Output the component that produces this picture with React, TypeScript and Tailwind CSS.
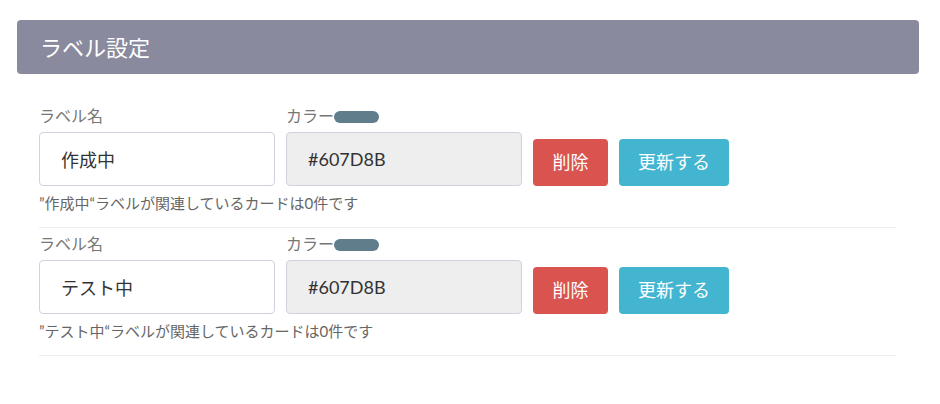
import React from 'react'

const labels = [
  { name: '作成中', color: '#607D8B' },
  { name: 'テスト中', color: '#607D8B' },
]

function LabelRow({ name, color }: { name: string; color: string }) {
  return (
    <div className="border-b border-[#eeeeee] pt-[4px] pb-[14px]">
      <div className="flex items-end gap-[11px]">
        <div className="flex w-[236px] flex-col">
          <span className="text-[16px] leading-[24px] text-[#777777]">ラベル名</span>
          <input
            defaultValue={name}
            className="mt-[4px] h-[54px] w-full rounded-[4px] border border-[#d4d0e2] bg-white px-[21px] text-[18px] text-[#333333] outline-none"
          />
        </div>
        <div className="flex w-[236px] flex-col">
          <span className="flex items-center text-[16px] leading-[24px] text-[#777777]">
            カラー
            <span className="mt-[1px] inline-block h-[12px] w-[45px] rounded-full" style={{ backgroundColor: color }} />
          </span>
          <input
            defaultValue={color}
            readOnly
            className="mt-[4px] h-[54px] w-full rounded-[4px] border border-[#d4d0e2] bg-[#eeeeee] px-[21px] text-[18px] text-[#333333] outline-none"
          />
        </div>
        <button className="h-[47px] w-[75px] rounded-[4px] bg-[#d9534f] text-[18px] text-white">削除</button>
        <button className="h-[47px] w-[110px] rounded-[4px] bg-[#43b5d1] text-[18px] text-white">更新する</button>
      </div>
      <p className="mt-[7px] text-[15px] leading-[20px] text-[#666666]">
        ”{name}“ラベルが関連しているカードは0件です
      </p>
    </div>
  )
}

export default function App() {
  return (
    <div className="h-[404px] w-[940px] bg-white pt-[20px] pl-[17px] pr-[21px] font-['Lato','Noto_Sans_CJK_JP',sans-serif]">
      <div className="flex h-[54px] items-center rounded-[4px] bg-[#8a8a9e] px-[23px]">
        <h1 className="text-[22px] font-normal text-white">ラベル設定</h1>
      </div>
      <div className="mt-[26px] pl-[22px] pr-[23px]">
        {labels.map((l, i) => (
          <LabelRow key={i} name={l.name} color={l.color} />
        ))}
      </div>
    </div>
  )
}
